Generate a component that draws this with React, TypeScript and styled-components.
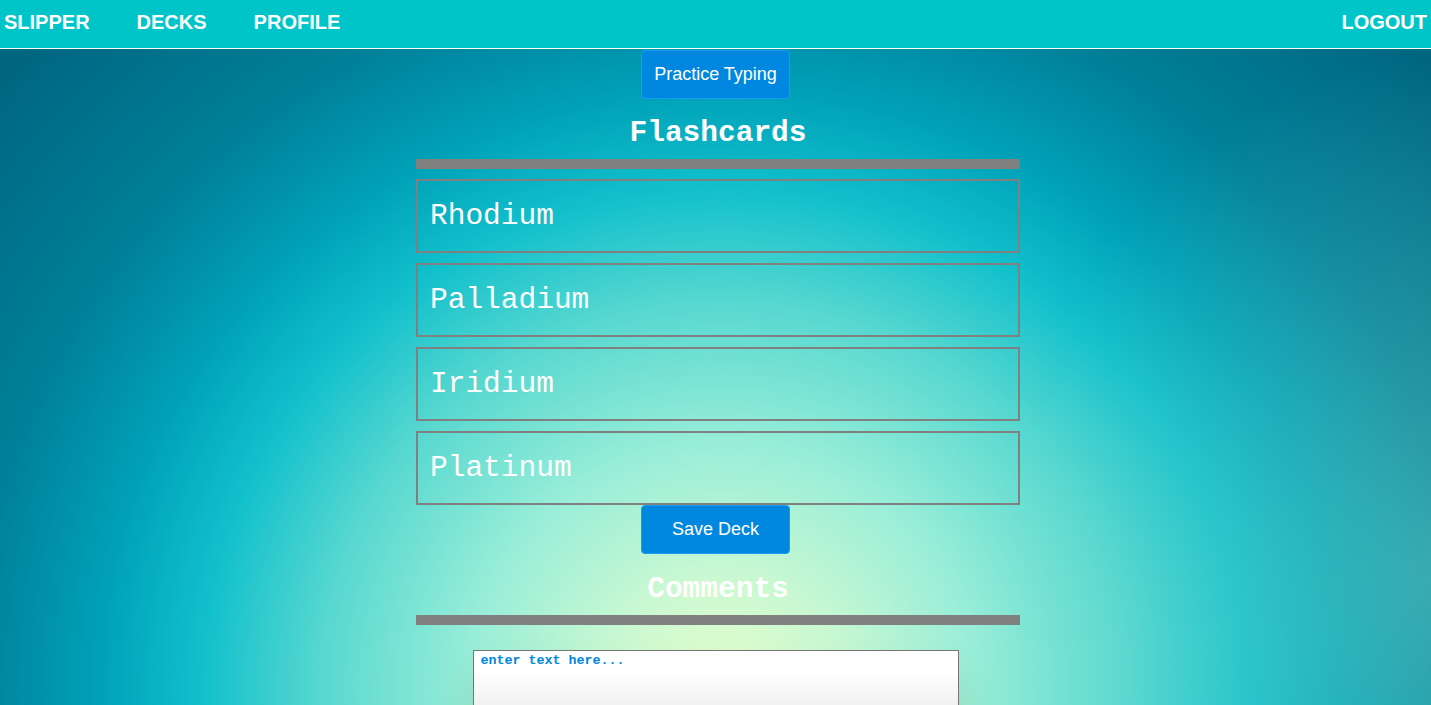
import React from "react";
import styled, { createGlobalStyle } from "styled-components";

const Global = createGlobalStyle`
  html, body { margin: 0; padding: 0; height: 100%; }
  body {
    font-family: "Liberation Sans", Arial, sans-serif;
    overflow: hidden;
    background-color: #006680;
  }
  #root { min-height: 100vh; }
`;

const Page = styled.div`
  min-height: 100vh;
  display: flex;
  flex-direction: column;
  background:
    radial-gradient(ellipse 420px 520px at 100% 78%, rgba(150, 225, 200, 0.38) 0%, rgba(150, 225, 200, 0) 100%),
    radial-gradient(
      ellipse 1000px 960px at 50.5% 93%,
      #e6ffcc 0px,
      #c8f8d2 120px,
      #9aeed8 250px,
      #58d8d0 400px,
      #12c0cc 520px,
      #00a2b8 620px,
      #00809a 750px,
      #006680 960px
    );
`;

const NavBar = styled.nav`
  height: 48px;
  box-sizing: border-box;
  padding: 0 4px 3px;
  border-bottom: 1px solid #ffffff;
  background: #00c5c8;
  display: flex;
  align-items: center;
  gap: 47px;
  box-sizing: content-box;
  height: 45px;
`;

const NavLink = styled.a<{ $right?: boolean }>`
  color: #ffffff;
  font-family: "Liberation Sans", Arial, sans-serif;
  font-weight: bold;
  font-size: 20px;
  text-decoration: none;
  margin-left: ${(p) => (p.$right ? "auto" : "0")};
  cursor: pointer;
`;

const Main = styled.main`
  display: flex;
  flex-direction: column;
  align-items: center;
  padding-top: 1px;
`;

const ActionButton = styled.button`
  width: 149px;
  height: 49px;
  background: #0088e0;
  border: 1px solid #1a9cf0;
  border-radius: 4px;
  color: #ffffff;
  font-family: "Liberation Sans", Arial, sans-serif;
  font-size: 18px;
  padding: 0;
  cursor: pointer;
`;

const Section = styled.section`
  width: 604px;
  margin-left: 5px;
  display: flex;
  flex-direction: column;
`;

const Heading = styled.h2<{ $top?: number }>`
  margin: ${(p) => p.$top ?? 19}px 0 11px;
  height: 30px;
  line-height: 30px;
  text-align: center;
  color: #ffffff;
  font-family: "Liberation Mono", "Courier New", monospace;
  font-weight: bold;
  font-size: 29.5px;
`;

const Rule = styled.div`
  height: 10px;
  background: #808080;
`;

const CardList = styled.div`
  display: flex;
  flex-direction: column;
  gap: 10px;
  margin-top: 10px;
`;

const Card = styled.div`
  height: 74px;
  box-sizing: border-box;
  border: 2px solid #808080;
  display: flex;
  align-items: center;
  padding: 0 12px;
  color: #ffffff;
  font-family: "Liberation Mono", "Courier New", monospace;
  font-size: 29.5px;
`;

const CommentBox = styled.textarea`
  margin-top: 25px;
  width: 486px;
  height: 90px;
  box-sizing: border-box;
  border: 1px solid #767676;
  padding: 2px 7px;
  resize: none;
  background: linear-gradient(180deg, #ffffff 0%, #ffffff 22%, #e4e4e4 100%);
  font-family: "Liberation Mono", "Courier New", monospace;
  font-weight: bold;
  font-size: 13.33px;
  color: #0088e0;
  box-shadow: 0 30px 45px rgba(70, 90, 20, 0.18);
  &::placeholder {
    color: #0088e0;
    opacity: 1;
  }
`;

const cards = ["Rhodium", "Palladium", "Iridium", "Platinum"];

export default function App() {
  return (
    <Page>
      <Global />
      <NavBar>
        <NavLink>SLIPPER</NavLink>
        <NavLink>DECKS</NavLink>
        <NavLink>PROFILE</NavLink>
        <NavLink $right>LOGOUT</NavLink>
      </NavBar>
      <Main>
        <ActionButton>Practice Typing</ActionButton>
        <Section>
          <Heading>Flashcards</Heading>
          <Rule />
          <CardList>
            {cards.map((c) => (
              <Card key={c}>{c}</Card>
            ))}
          </CardList>
        </Section>
        <ActionButton>Save Deck</ActionButton>
        <Section>
          <Heading $top={20}>Comments</Heading>
          <Rule />
        </Section>
        <CommentBox placeholder="enter text here..." />
      </Main>
    </Page>
  );
}
